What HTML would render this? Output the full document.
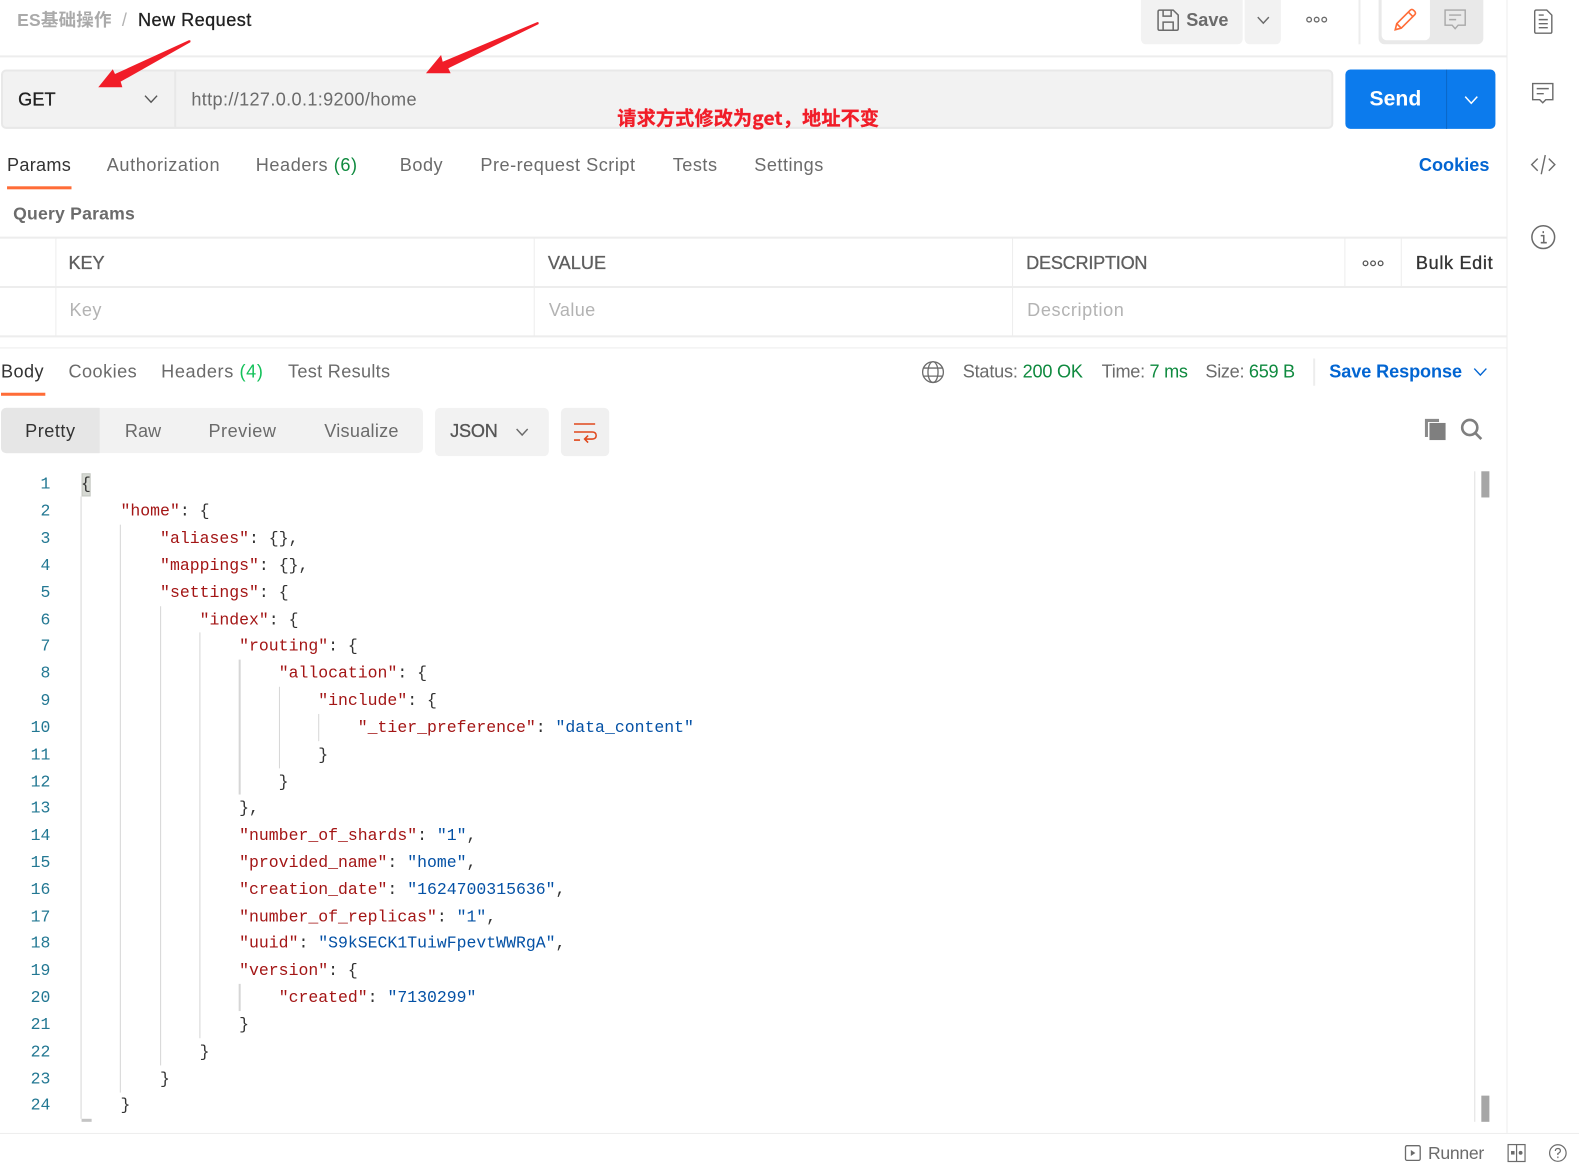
<!DOCTYPE html>
<html lang="zh"><head><meta charset="utf-8"><title>New Request</title>
<style>
html,body{margin:0;padding:0;width:1579px;height:1169px;overflow:hidden;background:#fff}
#p{position:absolute;left:0;top:0;width:1568px;height:1161px;transform:scale(1.00702);transform-origin:0 0;font-family:"Liberation Sans","Noto Sans CJK SC",sans-serif;font-size:18px;color:#6b6b6b}
.t{position:absolute;white-space:nowrap;line-height:24px;letter-spacing:.5px}
.m{-webkit-text-stroke:.3px currentColor}
.b{position:absolute;background:#ededed}
.d{color:#212121}.g{color:#0f8a3f}.l{color:#0265d2}.q{color:#b3b3b3}
svg{position:absolute;overflow:visible;fill:none}
pre{position:absolute;margin:0;font-family:"Liberation Mono",monospace;font-size:16.38px;line-height:26.83px;color:#333}
pre i{font-style:normal;color:#a31515}pre b{font-weight:normal;color:#0451a5}
.u{position:absolute;width:1.2px;background:#d6d6d6}
</style></head><body><div id="p">

<div class="t" style="left:17px;top:8px;font-weight:bold;color:#aaa;font-size:17.4px;letter-spacing:.2px">ES基础操作</div>
<div class="t q" style="left:121px;top:8px">/</div>
<div class="t d m" style="left:137px;top:8px;letter-spacing:.45px">New Request</div>

<div class="b" style="left:1133px;top:0;width:101px;height:44px;background:#f2f2f2;border-radius:0 0 5px 5px"></div>
<div class="b" style="left:1236px;top:0;width:36px;height:44px;background:#f2f2f2;border-radius:0 0 5px 5px"></div>
<svg style="left:1149px;top:9px" width="22" height="22" viewBox="0 0 22 22" stroke="#6b6b6b" stroke-width="1.5"><path d="M1 2.5Q1 1 2.500 1H16L21 6V19.500Q21 21 19.500 21H2.500Q1 21 1 19.500Z"/><path d="M6 1V7H14V1M6 21V13H16V21"/></svg>
<div class="t" style="left:1178px;top:8px;font-weight:bold;letter-spacing:-.05px">Save</div>
<svg style="left:1248px;top:16px" width="13" height="8" stroke="#6b6b6b" stroke-width="1.4"><path d="M1 1L6.500 7L12 1"/></svg>
<svg style="left:1297px;top:15px" width="22" height="9" stroke="#6b6b6b" stroke-width="1.3"><circle cx="3" cy="4.500" r="2.300"/><circle cx="10.500" cy="4.500" r="2.300"/><circle cx="18" cy="4.500" r="2.300"/></svg>
<div class="b" style="left:1349px;top:0;width:2px;height:44px"></div>
<div class="b" style="left:1368.500px;top:0;width:104px;height:44px;background:#e9e9e9;border-radius:0 0 6px 6px"></div>
<div class="b" style="left:1371.500px;top:0;width:48px;height:40px;background:#fff;border-radius:0 0 5px 5px"></div>
<svg style="left:1384px;top:8px" width="23" height="23" viewBox="0 0 23 23" stroke="#ff6c37" stroke-width="1.600"><path d="M1.500 21.500L3 15.500L16.500 2Q18 .8 19.500 2L21 3.500Q22.200 5 21 6.500L7.500 20Z"/><path d="M14.500 4L19 8.500M3 15.500L7.500 20"/></svg>
<svg style="left:1434px;top:9px" width="22" height="22" viewBox="0 0 22 22" stroke="#a8a8a8" stroke-width="1.400"><path d="M1 1H21V16H14L11 19.500L8 16H1Z"/><path d="M5 6H17M5 10.500H12"/></svg>

<div class="b" style="left:0;top:54.500px;width:1496px;height:2px"></div>
<div class="b" style="left:1495.500px;top:0;width:1.500px;height:1125px"></div>

<svg style="left:1523px;top:9px" width="19" height="25" viewBox="0 0 19 25" stroke="#6b6b6b" stroke-width="1.400"><path d="M1 2.500Q1 1 2.500 1H13L18 6V22.500Q18 24 16.500 24H2.500Q1 24 1 22.500Z"/><path d="M5 6H10M5 10.500H14M5 14.500H14M5 18.500H14"/></svg>
<svg style="left:1521px;top:82px" width="22" height="22" viewBox="0 0 22 22" stroke="#6b6b6b" stroke-width="1.400"><path d="M1 1H21V17H14L11 20L8 17H1Z"/><path d="M5 6H17M5 11H12"/></svg>
<svg style="left:1520px;top:153px" width="25" height="21" viewBox="0 0 25 21" stroke="#6b6b6b" stroke-width="1.400"><path d="M7 4.500L1 10.500L7 16.500M18 4.500L24 10.500L18 16.500M14.500 1L10.500 20"/></svg>
<svg style="left:1520px;top:223px" width="25" height="25" viewBox="0 0 25 25" stroke="#6b6b6b" stroke-width="1.500"><circle cx="12.500" cy="12.500" r="11.300"/><path d="M12.500 6.500V8.500M10 11H13V18M10 18H16" /></svg>

<div class="b" style="left:1px;top:68.500px;width:1323px;height:59.500px;background:#f2f2f2;border:2px solid #e8e8e8;border-radius:5px;box-sizing:border-box"></div>
<div class="b" style="left:173px;top:69px;width:2px;height:58px;background:#e8e8e8"></div>
<div class="t d m" style="left:18px;top:87px;letter-spacing:.1px">GET</div>
<svg style="left:143px;top:94px" width="14" height="9" stroke="#555" stroke-width="1.400"><path d="M1 1L7 7.500L13 1"/></svg>
<div class="t" style="left:190px;top:87px;letter-spacing:.34px">http://127.0.0.1:9200/home</div>

<div class="b" style="left:1335.500px;top:68.500px;width:149px;height:59.500px;background:#0c7bed;border-radius:5px"></div>
<div class="b" style="left:1436px;top:68.500px;width:1px;height:59.500px;background:#0a67c8"></div>
<div class="t" style="left:1360px;top:87px;color:#fff;font-weight:bold;font-size:21px;letter-spacing:0">Send</div>
<svg style="left:1454px;top:95px" width="14" height="9" stroke="#fff" stroke-width="1.500"><path d="M1 1L7 7.500L13 1"/></svg>

<div class="t" style="left:7px;top:152px;color:#333;letter-spacing:.25px">Params</div>
<div class="b" style="left:7px;top:185px;width:64px;height:3px;background:#ff6c37"></div>
<div class="t" style="left:106px;top:152px;letter-spacing:.58px">Authorization</div>
<div class="t" style="left:254px;top:152px;letter-spacing:.55px">Headers <span class="g">(6)</span></div>
<div class="t" style="left:397px;top:152px">Body</div>
<div class="t" style="left:477px;top:152px">Pre-request Script</div>
<div class="t" style="left:668px;top:152px">Tests</div>
<div class="t" style="left:749px;top:152px">Settings</div>
<div class="t l" style="left:1409px;top:152px;font-weight:bold;letter-spacing:0">Cookies</div>

<div class="t" style="left:13px;top:200px;font-weight:bold;letter-spacing:.2px;font-size:17.500px">Query Params</div>

<div class="b" style="left:0;top:235px;width:1496px;height:2px"></div>
<div class="b" style="left:0;top:284px;width:1496px;height:2px"></div>
<div class="b" style="left:0;top:333px;width:1496px;height:2px"></div>
<div class="b" style="left:0;top:344.500px;width:1496px;height:1.500px"></div>
<div class="b" style="left:54.500px;top:236px;width:1.500px;height:98px"></div>
<div class="b" style="left:529.500px;top:236px;width:1.500px;height:98px"></div>
<div class="b" style="left:1004.500px;top:236px;width:1.500px;height:98px"></div>
<div class="b" style="left:1334.500px;top:236px;width:1.500px;height:49px"></div>
<div class="b" style="left:1390.500px;top:236px;width:1.500px;height:49px"></div>
<div class="t m" style="left:68px;top:249px;letter-spacing:-.1px;color:#5e5e5e">KEY</div>
<div class="t m" style="left:544px;top:249px;letter-spacing:.05px;color:#5e5e5e">VALUE</div>
<div class="t m" style="left:1019px;top:249px;letter-spacing:-.25px;color:#5e5e5e">DESCRIPTION</div>
<svg style="left:1353px;top:257px" width="22" height="9" stroke="#555" stroke-width="1.300"><circle cx="3" cy="4.500" r="2.300"/><circle cx="10.500" cy="4.500" r="2.300"/><circle cx="18" cy="4.500" r="2.300"/></svg>
<div class="t m" style="left:1406px;top:249px;color:#333;letter-spacing:.65px">Bulk Edit</div>
<div class="t q" style="left:69px;top:296px;letter-spacing:.35px">Key</div>
<div class="t q" style="left:545px;top:296px;letter-spacing:.35px">Value</div>
<div class="t q" style="left:1020px;top:296px;letter-spacing:.6px">Description</div>

<div class="t" style="left:1px;top:357px;color:#333;letter-spacing:.4px">Body</div>
<div class="b" style="left:1px;top:390px;width:44px;height:3px;background:#ff6c37"></div>
<div class="t" style="left:68px;top:357px;letter-spacing:.45px">Cookies</div>
<div class="t" style="left:160px;top:357px;letter-spacing:.6px">Headers <span style="color:#14c15a">(4)</span></div>
<div class="t" style="left:286px;top:357px;letter-spacing:.3px">Test Results</div>

<svg style="left:915px;top:358px" width="23" height="23" viewBox="0 0 23 23" stroke="#6b6b6b" stroke-width="1.300"><circle cx="11.500" cy="11.500" r="10.300"/><ellipse cx="11.500" cy="11.500" rx="5" ry="10.300"/><path d="M2 7.500H21M2 15.500H21"/></svg>
<div class="t" style="left:956px;top:357px;letter-spacing:-.2px">Status: <span class="g">200 OK</span></div>
<div class="t" style="left:1094px;top:357px;letter-spacing:-.3px">Time: <span class="g">7 ms</span></div>
<div class="t" style="left:1197px;top:357px;letter-spacing:-.3px">Size: <span class="g">659 B</span></div>
<div class="b" style="left:1304px;top:356px;width:1.500px;height:27px"></div>
<div class="t l" style="left:1320px;top:357px;font-weight:bold;letter-spacing:-.1px">Save Response</div>
<svg style="left:1463px;top:365px" width="14" height="9" stroke="#0265d2" stroke-width="1.400"><path d="M1 1L7 7.500L13 1"/></svg>

<div class="b" style="left:1px;top:405px;width:419px;height:45px;background:#f2f2f2;border-radius:5px"></div>
<div class="b" style="left:1px;top:405px;width:98px;height:45px;background:#e6e6e6;border-radius:5px 0 0 5px"></div>
<div class="t" style="left:25px;top:416px;color:#333">Pretty</div>
<div class="t" style="left:124px;top:416px;letter-spacing:0">Raw</div>
<div class="t" style="left:207px;top:416px">Preview</div>
<div class="t" style="left:322px;top:416px;letter-spacing:.25px">Visualize</div>
<div class="b" style="left:432px;top:405px;width:113px;height:48px;background:#f2f2f2;border-radius:5px"></div>
<div class="t m" style="left:447px;top:416px;color:#555;letter-spacing:-.2px">JSON</div>
<svg style="left:512px;top:425px" width="13" height="8" stroke="#6b6b6b" stroke-width="1.400"><path d="M1 1L6.500 7L12 1"/></svg>
<div class="b" style="left:557px;top:405px;width:48px;height:48px;background:#f0f0f0;border-radius:5px"></div>
<svg style="left:569px;top:420px" width="24" height="20" viewBox="0 0 24 20" stroke="#e0481c" stroke-width="1.500"><path d="M1 1H22M1 9H19Q23 9 23 12.500Q23 16 19 16H12M15 12.500L11.500 16L15 19.500M1 17H7"/></svg>
<svg style="left:1414px;top:415px" width="23" height="23" viewBox="0 0 23 23"><path d="M1 1H15V4H4V19H1Z" fill="#8a8a8a"/><rect x="5.500" y="5" width="16" height="17" fill="#7f7f7f"/></svg>
<svg style="left:1450px;top:415px" width="23" height="23" viewBox="0 0 23 23" stroke="#7f7f7f" stroke-width="2.600"><circle cx="9.500" cy="9.500" r="7.500"/><path d="M15 15L21 21"/></svg>

<pre style="left:0;top:468.400px;width:50px;text-align:right;color:#237893">1
2
3
4
5
6
7
8
9
10
11
12
13
14
15
16
17
18
19
20
21
22
23
24</pre>

<div class="b" style="left:80.500px;top:470px;width:9px;height:23px;background:#d6d9d3;border:1px solid #c4c7c1;box-sizing:border-box"></div>
<div class="u" style="left:80.300px;top:493px;height:618px"></div>
<div class="b" style="left:80.500px;top:1111px;width:10px;height:2.500px;background:#c4c4c4"></div>
<div class="u" style="left:119.300px;top:521px;height:564px"></div>
<div class="u" style="left:158.800px;top:602px;height:456px"></div>
<div class="u" style="left:198px;top:628px;height:402.500px"></div>
<div class="u" style="left:237.400px;top:655px;height:134px"></div>
<div class="u" style="left:237.400px;top:977px;height:27px"></div>
<div class="u" style="left:276.600px;top:682px;height:80.500px"></div>
<div class="u" style="left:316px;top:709px;height:27px"></div>

<pre style="left:80.400px;top:468.400px">{
    <i>"home"</i>: {
        <i>"aliases"</i>: {},
        <i>"mappings"</i>: {},
        <i>"settings"</i>: {
            <i>"index"</i>: {
                <i>"routing"</i>: {
                    <i>"allocation"</i>: {
                        <i>"include"</i>: {
                            <i>"_tier_preference"</i>: <b>"data_content"</b>
                        }
                    }
                },
                <i>"number_of_shards"</i>: <b>"1"</b>,
                <i>"provided_name"</i>: <b>"home"</b>,
                <i>"creation_date"</i>: <b>"1624700315636"</b>,
                <i>"number_of_replicas"</i>: <b>"1"</b>,
                <i>"uuid"</i>: <b>"S9kSECK1TuiwFpevtWWRgA"</b>,
                <i>"version"</i>: {
                    <i>"created"</i>: <b>"7130299"</b>
                }
            }
        }
    }</pre>

<div class="b" style="left:1464px;top:468px;width:1.200px;height:646px;background:#e0e0e0"></div>
<div class="b" style="left:1471px;top:468px;width:8px;height:26px;background:#a6a6a6"></div>
<div class="b" style="left:1471px;top:1088px;width:8px;height:26px;background:#a6a6a6"></div>

<div class="b" style="left:0;top:1124.500px;width:1568px;height:1.500px"></div>
<svg style="left:1395px;top:1137px" width="16" height="16" viewBox="0 0 16 16" stroke="#6b6b6b" stroke-width="1.300"><rect x=".7" y=".7" width="14.600" height="14.600" rx="1.500"/><path d="M6 5L10.500 8L6 11Z" fill="#6b6b6b" stroke="none"/></svg>
<div class="t" style="left:1418px;top:1133px;font-size:17.500px;letter-spacing:-.3px">Runner</div>
<svg style="left:1497px;top:1136px" width="18" height="18" viewBox="0 0 18 18" stroke="#6b6b6b" stroke-width="1.200"><rect x=".6" y=".6" width="16.800" height="16.800"/><path d="M9 .6V17.400"/><rect x="3.500" y="7" width="3.500" height="3.500" fill="#6b6b6b" stroke="none"/><circle cx="13" cy="8.800" r="1.900" fill="#6b6b6b" stroke="none"/></svg>
<svg style="left:1538px;top:1136px" width="18" height="18" viewBox="0 0 18 18" stroke="#6b6b6b" stroke-width="1.200"><circle cx="9" cy="9" r="8.200"/><path d="M6.500 7Q6.500 4.500 9 4.500Q11.500 4.500 11.500 6.800Q11.500 8.200 9 9.500V11M9 12.500V14"/></svg>

<svg style="left:0;top:0" width="600" height="100"><path d="M187.800 39.800L189.300 40.400L189 42L119.800 81.100L121.500 86.700L97.600 86.700L112 68.800L114.200 73.500Z" fill="#f11d28"/><path d="M533.800 21.800L535 22.500L534.800 24L445.200 67.800L447.500 72.800L423 72.800L438 54.600L439.600 61.300Z" fill="#f11d28"/></svg>
<div class="t m" style="left:613px;top:105px;color:#f11d28;font-size:19px;font-weight:bold;letter-spacing:.15px;font-family:'Noto Sans CJK SC',sans-serif">请求方式修改为get，地址不变</div>

</div></body></html>
